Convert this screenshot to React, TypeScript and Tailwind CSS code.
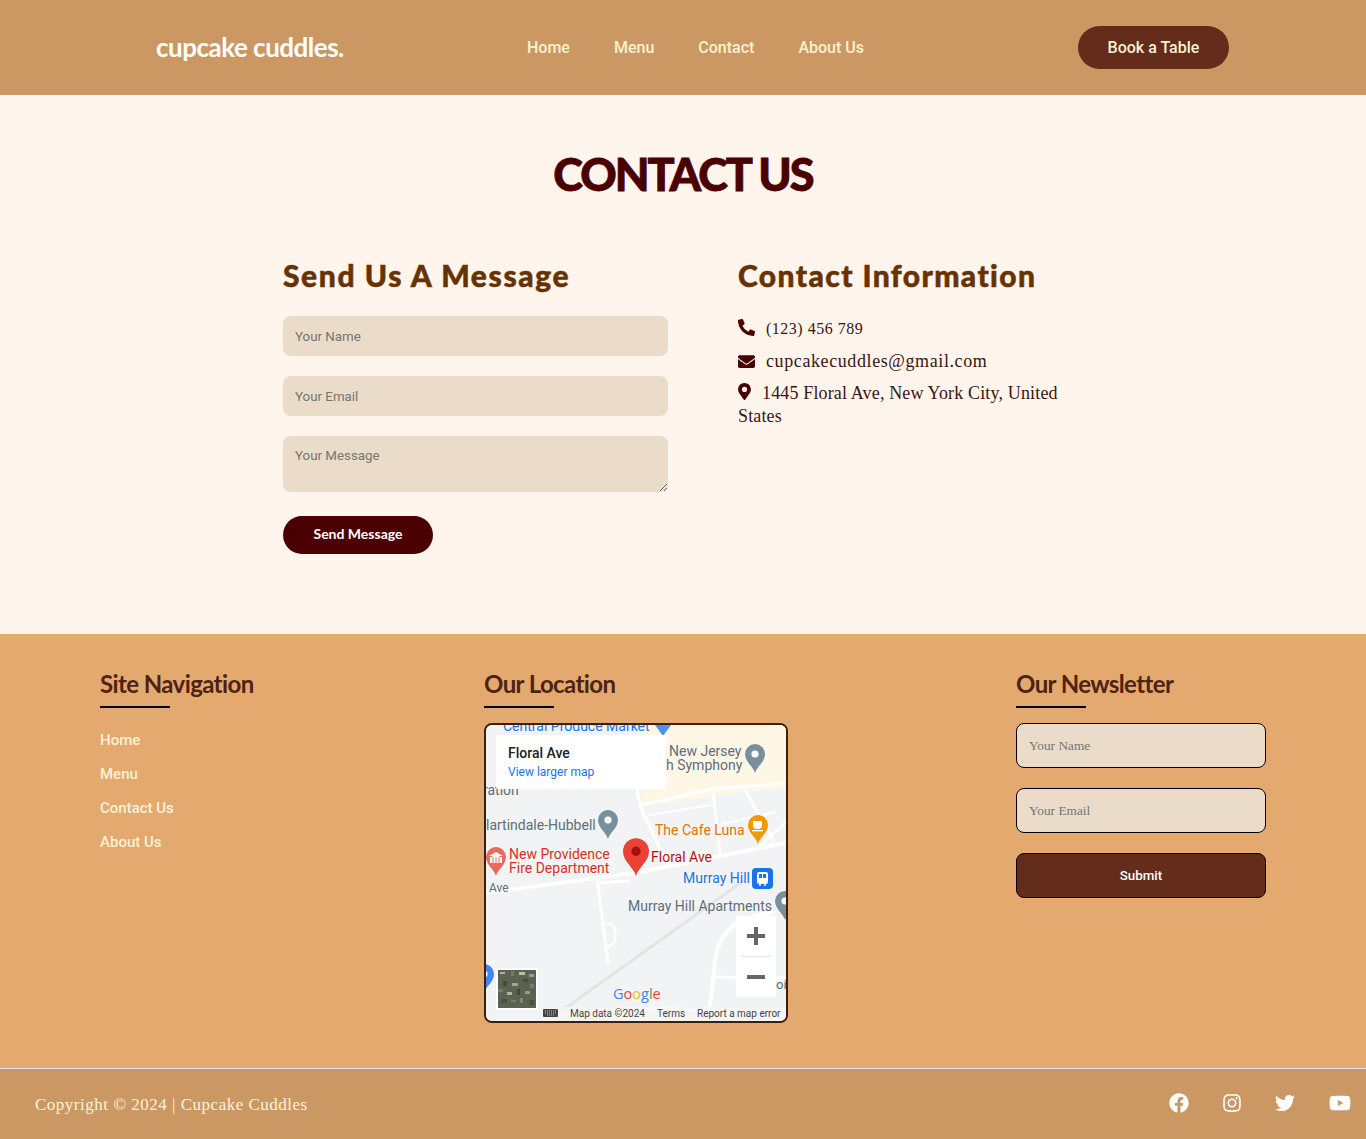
import { FaPhoneAlt, FaEnvelope, FaMapMarkerAlt, FaFacebook, FaInstagram, FaTwitter, FaYoutube } from 'react-icons/fa'

const roboto = "font-['Roboto',sans-serif]"
const spartan = "font-['Lato',sans-serif]"
const serif = "font-['Liberation_Serif',serif]"

function Pin({ x, y, color, dot = '#fff', scale = 1 }: { x: number; y: number; color: string; dot?: string; scale?: number }) {
  // x,y is the tip of the pin
  return (
    <g transform={`translate(${x} ${y}) scale(${scale})`}>
      <path d="M0 0C-2-7-10-11-10-19A10 10 0 0 1 10-19C10-11 2-7 0 0Z" fill={color} />
      <circle cx="0" cy="-19" r="3.6" fill={dot} />
    </g>
  )
}

// rough speckle for the satellite thumbnail
const speckle = [
  [500, 972, 5, 2, '#c9cdc4'], [511, 971, 3, 5, '#7d8474'], [519, 972, 6, 3, '#d7dad2'], [529, 974, 5, 3, '#a6b0b4'],
  [503, 981, 4, 5, '#3a4033'], [512, 983, 6, 3, '#b6bab0'], [523, 979, 5, 3, '#3f4537'], [530, 984, 4, 4, '#7d8474'],
  [498, 989, 5, 3, '#7d8474'], [507, 992, 5, 3, '#c9cdc4'], [517, 989, 3, 6, '#3a4033'], [525, 991, 5, 3, '#a9ada3'],
  [501, 999, 6, 4, '#444a3b'], [511, 1000, 5, 2, '#7d8474'], [520, 998, 3, 5, '#8a9080'], [529, 1000, 5, 5, '#444a3b'],
] as const

function MapDrawing() {
  const road = { fill: 'none', stroke: '#fff', strokeWidth: 3, strokeLinecap: 'round' as const, strokeLinejoin: 'round' as const }
  const t = { fontFamily: 'Roboto, sans-serif', fontSize: 14 }
  return (
    <svg viewBox="486 725 300 296" className="block w-full h-full">
      <rect x="486" y="725" width="300" height="296" fill="#f1f3f4" />
      <path d="M640 725H786V788L737 793 712 797 645 806 640 790Z" fill="#fef7e6" />

      {/* roads */}
      <g {...road}>
        <path d="M486 893L640 872 790 842" strokeWidth="4" />
        <path d="M597 877L608 963" />
        <path d="M600 883L628 881" />
        <path d="M608 923C618 925 618 942 608 947" strokeWidth="2.5" />
        <path d="M637 790L641 808 668 866" />
        <path d="M643 805L712 789 737 787 783 783" />
        <path d="M650 815L710 805" strokeWidth="2" />
        <path d="M713 790L720 855" />
        <path d="M745 790L773 840" />
        <path d="M722 824L776 812" strokeWidth="2" />
        <path d="M755 850L786 822" />
        <path d="M773 913C745 915 725 925 717 950C712 970 714 995 708 1012" strokeWidth="4" />
        <path d="M713 977L786 978" />
        <path d="M640 1012C660 1005 680 1008 700 1012" />
      </g>
      <path d="M550 1018L743 880M553 1018L746 880" stroke="#d5d7db" strokeWidth="1" />

      {/* labels */}
      <text x="503" y="731" {...t} fill="#1a73e8">Central Produce Market</text>
      <path d="M663 736L655 725H671Z" fill="#4f8ff0" />
      <text x="669" y="756" {...t} fill="#5f6e7a">New Jersey</text>
      <text x="666" y="770" {...t} fill="#5f6e7a">h Symphony</text>
      <Pin x={755} y={773} color="#78909c" scale={1} />
      <text x="483" y="795" {...t} fill="#5f6e7a">ration</text>
      <text x="486" y="830" {...t} fill="#5f6e7a">lartindale-Hubbell</text>
      <Pin x={608} y={839} color="#78909c" />
      <text x="655" y="835" {...t} fill="#e37400">The Cafe Luna</text>
      <Pin x={758} y={844} color="#f29900" />
      <path d="M753 821H762V825C762 828 760 829 757.5 829S753 828 753 825Z" fill="#fff" />
      <rect x="752" y="830" width="11" height="1.4" fill="#fff" />
      <text x="509" y="859" {...t} fill="#d93025">New Providence</text>
      <text x="509" y="873" {...t} fill="#d93025">Fire Department</text>
      <Pin x={496} y={876} color="#ea6a5f" />
      <path d="M496 852L503 856H489Z" fill="#fff" />
      <rect x="490" y="857" width="12" height="6" fill="#fff" />
      <path d="M493 857V863M496 857V863M499 857V863" stroke="#ea6a5f" strokeWidth="1" />
      <Pin x={636} y={876} color="#ea4335" dot="#a50e0e" scale={1.3} />
      <text x="651" y="862" {...t} fill="#b31412">Floral Ave</text>
      <text x="683" y="883" {...t} fill="#1a73e8">Murray Hill</text>
      <rect x="752" y="868" width="21" height="21" rx="4" fill="#1a73e8" />
      <rect x="757" y="872" width="11" height="12" rx="2" fill="#fff" />
      <rect x="759" y="874" width="3" height="4" fill="#1a73e8" />
      <rect x="763" y="874" width="3" height="4" fill="#1a73e8" />
      <path d="M759 885H761M764 885H766" stroke="#fff" strokeWidth="1.6" />
      <text x="489" y="892" fontFamily="Roboto, sans-serif" fontSize="12" fill="#5f6e7a">Ave</text>
      <text x="628" y="911" {...t} fill="#5f6e7a">Murray Hill Apartments</text>
      <Pin x={785} y={920} color="#78909c" />
      <text x="776" y="989" fontFamily="Roboto, sans-serif" fontSize="13" fill="#5f6e7a">ois</text>
      <Pin x={484} y={993} color="#4285f4" />

      {/* popup */}
      <rect x="496" y="735" width="170" height="54" rx="2" fill="#fff" />
      <text x="508" y="758" fontFamily="Roboto, sans-serif" fontSize="14" fontWeight="500" fill="#202124">Floral Ave</text>
      <text x="508" y="776" fontFamily="Roboto, sans-serif" fontSize="12" fill="#1a73e8">View larger map</text>

      {/* zoom */}
      <rect x="736" y="916" width="40" height="81" fill="#fff" />
      <rect x="741" y="956" width="30" height="1" fill="#e6e6e6" />
      <path d="M747 936H765M756 927V945" stroke="#666" strokeWidth="4" />
      <path d="M747 977H765" stroke="#666" strokeWidth="4" />

      {/* satellite thumb */}
      <rect x="496" y="968" width="42" height="42" fill="#fff" />
      <rect x="498" y="970" width="38" height="38" fill="#5b6350" />
      {speckle.map(([x, y, w, h, c], i) => (
        <rect key={i} x={x} y={y} width={w} height={h} fill={c} fillOpacity="0.75" />
      ))}

      {/* google */}
      <text x="613" y="999" fontFamily="Open Sans, sans-serif" fontSize="14.5">
        <tspan fill="#4285f4">G</tspan><tspan fill="#ea4335">o</tspan><tspan fill="#fbbc05">o</tspan><tspan fill="#4285f4">g</tspan><tspan fill="#34a853">l</tspan><tspan fill="#ea4335">e</tspan>
      </text>

      {/* attribution */}
      <rect x="540" y="1007" width="246" height="14" fill="#f5f5f5" fillOpacity="0.75" />
      <rect x="543" y="1009" width="15" height="8" rx="1" fill="#444" />
      <path d="M545 1011H556M545 1013H556M547 1015H554" stroke="#ddd" strokeWidth="0.8" strokeDasharray="1 1" />
      <g fontFamily="Roboto, sans-serif" fontSize="10" fill="#444">
        <text x="570" y="1017">Map data ©2024</text>
        <text x="657" y="1017">Terms</text>
        <text x="697" y="1017">Report a map error</text>
      </g>
    </svg>
  )
}

export default function App() {
  return (
    <div className="min-h-[1139px] bg-[#fff5ec] flex flex-col">
      {/* Header */}
      <header className={`h-[95px] bg-[#cb9864] flex items-center pl-[156px] pr-[137px] ${roboto}`}>
        <a className={`w-[371px] text-[26px] font-bold tracking-[-0.5px] text-white ${spartan}`}>cupcake cuddles.</a>
        <nav className="flex gap-11 text-[16px] font-medium text-[#fdf1cf]">
          <a>Home</a>
          <a>Menu</a>
          <a>Contact</a>
          <a>About Us</a>
        </nav>
        <button className="ml-auto w-[151px] h-[43px] rounded-full bg-[#632c1b] text-[16px] font-medium text-[#fdf1cf]">Book a Table</button>
      </header>

      {/* Contact */}
      <main className="h-[539px] pt-[51px]">
        <h1 className={`text-center text-[45px] leading-[56px] font-black tracking-[-2px] text-[#4a0000] [-webkit-text-stroke:0.8px_#4a0000] ${spartan}`}>CONTACT US</h1>
        <div className="mt-[55px] pl-[283px] flex gap-[70px]">
          <section className="w-[385px]">
            <h2 className={`text-[30px] leading-[36px] font-black tracking-[1.6px] text-[#663300] [-webkit-text-stroke:0.5px_#663300] ${spartan}`}>Send Us A Message</h2>
            <form className={`mt-[23px] flex flex-col gap-5 text-[13.33px] ${roboto}`}>
              <input placeholder="Your Name" className="h-10 px-3 rounded-lg bg-[#eadcc8] placeholder:text-[#757575]" />
              <input placeholder="Your Email" className="h-10 px-3 rounded-lg bg-[#eadcc8] placeholder:text-[#757575]" />
              <textarea placeholder="Your Message" className="block h-14 px-3 py-[10px] rounded-lg bg-[#eadcc8] placeholder:text-[#757575]" />
              <button type="button" className={`mt-1 w-[150px] h-[38px] pb-[3px] rounded-full bg-[#4a0000] text-[14px] font-bold text-white ${spartan}`}>Send Message</button>
            </form>
          </section>
          <section className="w-[345px]">
            <h2 className={`text-[30px] leading-[36px] font-black tracking-[1.4px] text-[#663300] [-webkit-text-stroke:0.5px_#663300] ${spartan}`}>Contact Information</h2>
            <div className={`mt-[24px] text-[18px] leading-[23px] text-[#3a1410] ${serif}`}>
              <p className="flex items-center gap-[11px] text-[16px] tracking-[0.5px]"><FaPhoneAlt className="-mt-[3px] w-[17px] h-[17px] text-[#4a0000]" />(123) 456 789</p>
              <p className="mt-[10px] flex items-center gap-[11px] tracking-[0.6px]"><FaEnvelope className="w-[17px] h-[17px] text-[#4a0000]" />cupcakecuddles@gmail.com</p>
              <p className="mt-[9px] tracking-[0.15px]"><FaMapMarkerAlt className="inline-block w-[13px] h-[17px] mr-[11px] align-[-1px] text-[#4a0000]" />1445 Floral Ave, New York City, United States</p>
            </div>
          </section>
        </div>
      </main>

      {/* Footer columns */}
      <div className="h-[434px] bg-[#e3a96f] pt-[36px] pl-[100px] flex">
        <section className="w-[384px]">
          <FooterTitle>Site Navigation</FooterTitle>
          <ul className={`mt-[23px] flex flex-col gap-4 text-[15px] leading-[18px] font-medium text-[#fff1d8] ${roboto}`}>
            <li>Home</li>
            <li>Menu</li>
            <li>Contact Us</li>
            <li>About Us</li>
          </ul>
        </section>
        <section className="w-[532px]">
          <FooterTitle>Our Location</FooterTitle>
          <div className="mt-[15px] w-[304px] h-[300px] border-2 border-[#3f1d0e] rounded-lg overflow-hidden">
            <MapDrawing />
          </div>
        </section>
        <section className="w-[250px]">
          <FooterTitle>Our Newsletter</FooterTitle>
          <form className="mt-[15px] flex flex-col gap-5">
            <input placeholder="Your Name" className={`h-[45px] px-3 border border-black rounded-lg bg-[#eadcc8] text-[13.33px] placeholder:text-[#757575] ${serif}`} />
            <input placeholder="Your Email" className={`h-[45px] px-3 border border-black rounded-lg bg-[#eadcc8] text-[13.33px] placeholder:text-[#757575] ${serif}`} />
            <button type="button" className={`h-[45px] pt-px border border-black rounded-lg bg-[#632c1b] text-[13.33px] font-medium text-white ${roboto}`}>Submit</button>
          </form>
        </section>
      </div>

      {/* Bottom bar */}
      <footer className="h-[71px] border-t border-[#e6e6e6] bg-[#cb9864] flex items-center pl-[35px] pr-[15px]">
        <p className={`pt-[2px] text-[17px] tracking-[0.5px] text-[#fff1d8] ${serif}`}>Copyright © 2024 | Cupcake Cuddles</p>
        <div className="ml-auto mb-[2px] flex items-center gap-[33px] text-white">
          <FaFacebook className="w-5 h-5" />
          <FaInstagram className="w-5 h-5" />
          <FaTwitter className="w-5 h-5" />
          <FaYoutube className="ml-[1px] w-[22px] h-[22px]" />
        </div>
      </footer>
    </div>
  )
}

function FooterTitle({ children }: { children: string }) {
  return (
    <div>
      <h3 className={`text-[24px] leading-[28px] font-bold tracking-[-0.6px] text-[#4d2412] ${spartan}`}>{children}</h3>
      <div className="mt-[8px] w-[70px] h-[2px] bg-black" />
    </div>
  )
}
